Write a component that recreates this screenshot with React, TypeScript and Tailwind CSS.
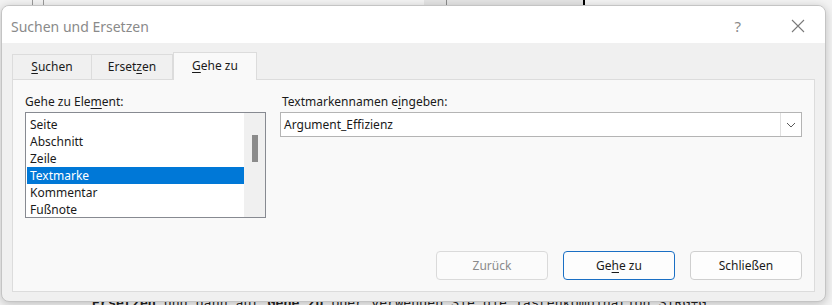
import React from "react";

const items = ["Seite", "Abschnitt", "Zeile", "Textmarke", "Kommentar", "Fußnote"];

const ui = "font-['Segoe_UI','Noto_Sans',sans-serif]";

export default function App() {
  return (
    <div className={`relative h-[305px] w-[832px] overflow-hidden bg-[#f3f3f3] ${ui}`}>
      {/* document behind the dialog */}
      <div className="absolute left-[32px] top-0 h-[5px] w-[12px] border-x border-[#9a9a9a]" />
      <div className="absolute left-[424px] top-0 h-[5px] w-[161px] border-r-2 border-black bg-[#e4e4e4]">
        <div className="ml-[22px] h-full w-px bg-[#8a8a8a]" />
      </div>
      <p className="absolute left-[92px] top-[296px] whitespace-nowrap font-['Liberation_Mono',monospace] text-[13.3px] leading-[16px] text-[#222]">
        <b>Ersetzen</b> und dann auf <b>Gehe zu</b> oder verwenden Sie die Tastenkombination STRG+G.
      </p>

      {/* dialog */}
      <div className="absolute left-[1px] top-[5px] flex h-[297px] w-[825px] flex-col overflow-hidden rounded-[8px] border border-[#c4c4c4] bg-[#f0f0f0] shadow-[0_2px_10px_rgba(0,0,0,0.22)]">
        <div className="flex h-[37px] shrink-0 items-center bg-white pl-[9px] pr-[20px] pt-[3px]">
          <span className="text-[14px] text-[#8a8a8a]">Suchen und Ersetzen</span>
          <span className="ml-auto mr-[50px] text-[15px] text-[#8a8a8a]">?</span>
          <svg width="14" height="14" viewBox="0 0 14 14">
            <path d="M1 1L13 13M13 1L1 13" stroke="#7a7a7a" strokeWidth="1.1" />
          </svg>
        </div>

        <div className="flex flex-1 flex-col pl-[10px] pr-[10px] pb-[9px] text-[12px] text-[#1a1a1a]">
          {/* tabs */}
          <div className="mt-[9px] flex h-[27px] items-end">
            <div className="flex h-[25px] w-[80px] items-center justify-center border border-b-0 border-[#dcdcdc] bg-[#f0f0f0]">
              <span><u className="underline-offset-2">S</u>uchen</span>
            </div>
            <div className="flex h-[25px] w-[81px] items-center justify-center border border-b-0 border-l-0 border-[#dcdcdc] bg-[#f0f0f0]">
              <span>Erset<u className="underline-offset-2">z</u>en</span>
            </div>
            <div className="relative top-px z-10 flex h-[28px] w-[84px] items-center justify-center border border-b-0 border-[#dcdcdc] bg-[#f9f9f9] pb-[2px]">
              <span><u className="underline-offset-2">G</u>ehe zu</span>
            </div>
          </div>

          {/* panel */}
          <div className="flex flex-1 flex-col border border-[#dcdcdc] bg-[#f9f9f9] pl-[12px] pr-[12px] pt-[14px] pb-[11px]">
            <div className="flex">
              <div className="w-[243px]">
                <div className="h-[18px] leading-[16px]">
                  Gehe zu Ele<u className="underline-offset-2">m</u>ent:
                </div>
                <div className="flex h-[106px] border border-[#878a91] bg-white">
                  <div className="flex-1 pl-px pt-[3px]">
                    {items.map((it) => (
                      <div
                        key={it}
                        className={`flex h-[17px] items-center px-[3px] ${
                          it === "Textmarke" ? "bg-[#0078d7] text-white" : ""
                        }`}
                      >
                        {it}
                      </div>
                    ))}
                  </div>
                  <div className="flex w-[21px] justify-center bg-[#f0f0f0] pt-[22px]">
                    <div className="h-[27px] w-[6px] bg-[#8b8b8b]" />
                  </div>
                </div>
              </div>

              <div className="ml-[14px] flex-1">
                <div className="h-[18px] pl-[2px] leading-[16px]">
                  Textmarkennamen e<u className="underline-offset-2">i</u>ngeben:
                </div>
                <div className="flex h-[25px] w-[522px] border border-[#b4b4b4] bg-white">
                  <div className="flex flex-1 items-center pl-[3px]">Argument_Effizienz</div>
                  <div className="flex w-[21px] items-center justify-center border-l border-[#e0e0e0]">
                    <svg width="10" height="6" viewBox="0 0 10 6">
                      <path d="M1 1L5 5L9 1" fill="none" stroke="#5a5a5a" strokeWidth="1" />
                    </svg>
                  </div>
                </div>
              </div>
            </div>

            <div className="mt-auto flex justify-end gap-[15px]">
              <button className="h-[29px] w-[112px] rounded-[4px] border border-[#dadada] bg-[#fbfbfb] text-[#8a8a8a]">
                Zurück
              </button>
              <button className="h-[29px] w-[112px] rounded-[4px] border border-[#1a6fc4] bg-[#fdfdfd] text-[#1a1a1a]">
                Ge<u className="underline-offset-2">h</u>e zu
              </button>
              <button className="h-[29px] w-[112px] rounded-[4px] border border-[#cfcfcf] bg-[#fdfdfd] text-[#1a1a1a]">
                Schließen
              </button>
            </div>
          </div>
        </div>
      </div>
    </div>
  );
}
